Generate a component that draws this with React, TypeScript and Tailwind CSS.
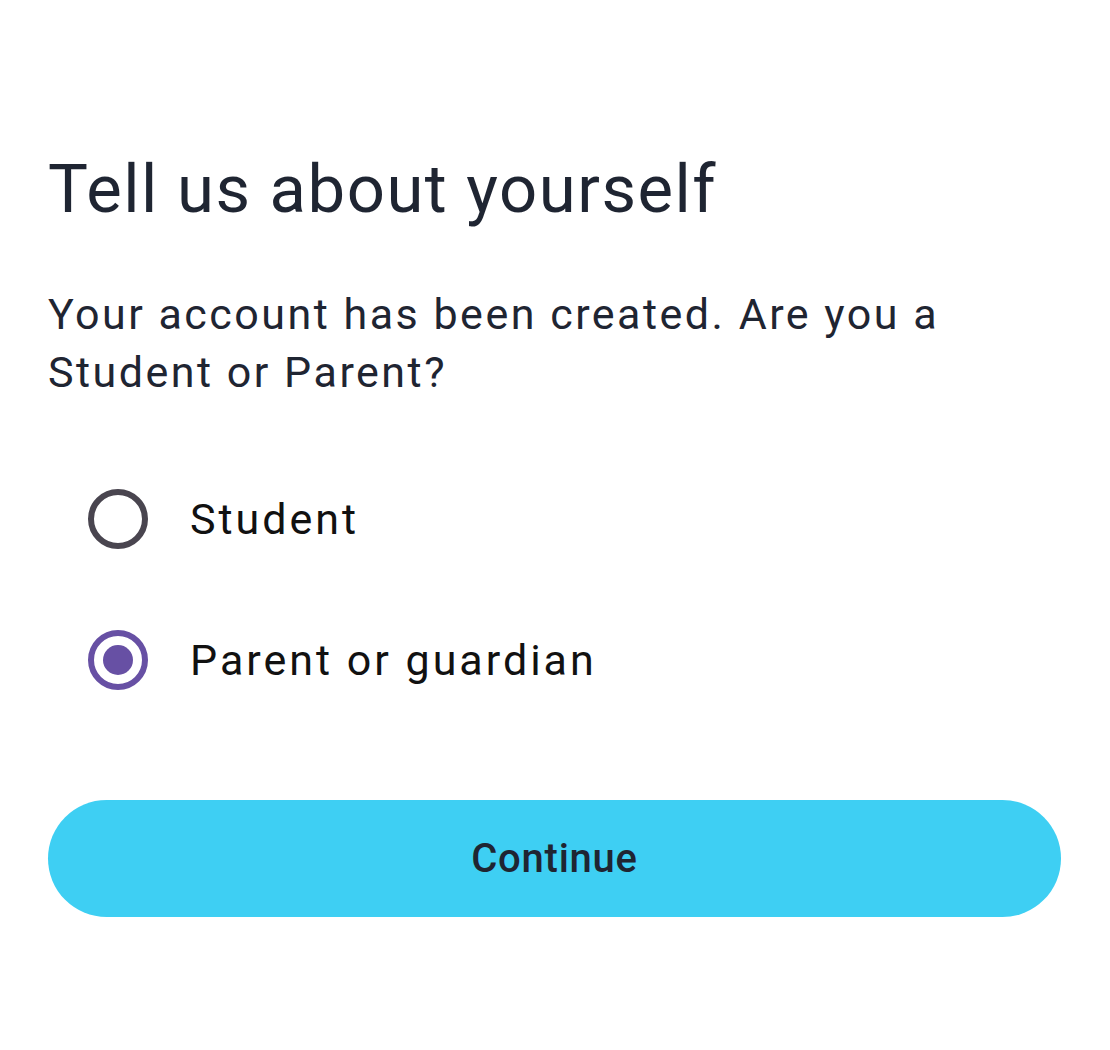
import { useState } from "react";

const options = [
  { id: "student", label: "Student" },
  { id: "parent", label: "Parent or guardian" },
];

export default function App() {
  const [role, setRole] = useState("parent");

  return (
    <div className="min-h-screen w-full bg-white px-[48px] pt-[144px] font-['Roboto',sans-serif]">
      <h1 className="text-[67px] leading-[90px] font-normal tracking-[1.5px] text-[#1f2532]">
        Tell us about yourself
      </h1>
      <p className="mt-[51px] max-w-[960px] text-[43px] leading-[58px] tracking-[2.5px] text-[#1f2532]">
        Your account has been created. Are you a Student or Parent?
      </p>

      {/* Role options */}
      <div className="mt-[78px] flex flex-col gap-[61px] pl-[40px]">
        {options.map((opt) => {
          const checked = role === opt.id;
          return (
            <button
              key={opt.id}
              onClick={() => setRole(opt.id)}
              className="flex h-[80px] items-center gap-[42px] text-left"
            >
              <span
                className={`flex h-[60px] w-[60px] shrink-0 items-center justify-center rounded-full border-[6px] ${
                  checked ? "border-[#6750a4]" : "border-[#49454f]"
                }`}
              >
                {checked && <span className="h-[30px] w-[30px] rounded-full bg-[#6750a4]" />}
              </span>
              <span className="text-[43px] leading-[50px] tracking-[3px] text-[#111111]">
                {opt.label}
              </span>
            </button>
          );
        })}
      </div>

      <button className="mt-[100px] flex h-[117px] w-[1013px] items-center justify-center rounded-full bg-[#3ecff3] text-[40px] font-medium tracking-[0.75px] text-[#1f2532]">
        Continue
      </button>
    </div>
  );
}
